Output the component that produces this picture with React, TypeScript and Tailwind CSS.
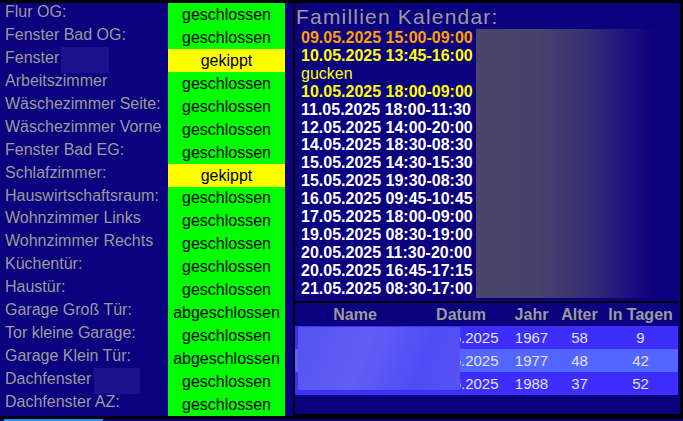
import React from "react";

const rows: { label: string; status: string; blur?: { left: number; width: number } }[] = [
  { label: "Flur OG:", status: "geschlossen" },
  { label: "Fenster Bad OG:", status: "geschlossen" },
  { label: "Fenster", status: "gekippt", blur: { left: 61, width: 48 } },
  { label: "Arbeitszimmer", status: "geschlossen" },
  { label: "Wäschezimmer Seite:", status: "geschlossen" },
  { label: "Wäschezimmer Vorne", status: "geschlossen" },
  { label: "Fenster Bad EG:", status: "geschlossen" },
  { label: "Schlafzimmer:", status: "gekippt" },
  { label: "Hauswirtschaftsraum:", status: "geschlossen" },
  { label: "Wohnzimmer Links", status: "geschlossen" },
  { label: "Wohnzimmer Rechts", status: "geschlossen" },
  { label: "Küchentür:", status: "geschlossen" },
  { label: "Haustür:", status: "geschlossen" },
  { label: "Garage Groß Tür:", status: "abgeschlossen" },
  { label: "Tor kleine Garage:", status: "geschlossen" },
  { label: "Garage Klein Tür:", status: "abgeschlossen" },
  { label: "Dachfenster", status: "geschlossen", blur: { left: 94, width: 46 } },
  { label: "Dachfenster AZ:", status: "geschlossen" },
];

const events: { text: string; color: string; bold: boolean }[] = [
  { text: "09.05.2025 15:00-09:00", color: "text-[#ffa200]", bold: true },
  { text: "10.05.2025 13:45-16:00", color: "text-[#ffff00]", bold: true },
  { text: "gucken", color: "text-[#ffff00]", bold: false },
  { text: "10.05.2025 18:00-09:00", color: "text-[#ffff00]", bold: true },
  { text: "11.05.2025 18:00-11:30", color: "text-white", bold: true },
  { text: "12.05.2025 14:00-20:00", color: "text-white", bold: true },
  { text: "14.05.2025 18:30-08:30", color: "text-white", bold: true },
  { text: "15.05.2025 14:30-15:30", color: "text-white", bold: true },
  { text: "15.05.2025 19:30-08:30", color: "text-white", bold: true },
  { text: "16.05.2025 09:45-10:45", color: "text-white", bold: true },
  { text: "17.05.2025 18:00-09:00", color: "text-white", bold: true },
  { text: "19.05.2025 08:30-19:00", color: "text-white", bold: true },
  { text: "20.05.2025 11:30-20:00", color: "text-white", bold: true },
  { text: "20.05.2025 16:45-17:15", color: "text-white", bold: true },
  { text: "21.05.2025 08:30-17:00", color: "text-white", bold: true },
];

const birthdays = [
  { name: "Person A", datum: "18.05.2025", jahr: "1967", alter: "58", tage: "9", bg: "bg-[#3d2efc]" },
  { name: "Person B", datum: "20.06.2025", jahr: "1977", alter: "48", tage: "42", bg: "bg-[#5366ff]" },
  { name: "Person C", datum: "30.06.2025", jahr: "1988", alter: "37", tage: "52", bg: "bg-[#3d2efc]" },
];

const cols = "grid grid-cols-[120px_92px_49px_47px_75px]";

export default function App() {
  return (
    <div className="w-[683px] h-[421px] bg-black overflow-hidden font-['Liberation_Sans',Arial,sans-serif]">
      <div className="h-[3px]" />
      <div className="flex h-[413px] bg-[#0b007d]">
        {/* left: sensors */}
        <div className="w-[293px] flex flex-col">
          {rows.map((r, i) => (
            <div key={i} className="relative flex h-[22.94px]">
              <div className="w-[168px] pl-[5px] text-[16px] leading-[18px] text-[#9b9b9b] whitespace-nowrap">
                {r.label}
              </div>
              {r.blur && (
                <div
                  className="absolute top-[-2px] h-[26px] bg-[#1a1290]"
                  style={{ left: r.blur.left, width: r.blur.width }}
                />
              )}
              <div
                className={`w-[117px] flex items-center justify-center text-[16px] leading-[23px] text-black whitespace-nowrap ${
                  r.status === "gekippt" ? "bg-[#ffff00]" : "bg-[#00ff00]"
                }`}
              >
                {r.status}
              </div>
            </div>
          ))}
        </div>

        {/* right panel */}
        <div className="w-[390px] flex flex-col border-l-2 border-r-[3px] border-b-2 border-black">
          <div className="h-[298px] flex flex-col">
            <div className="pl-[1px] pt-[2px] text-[21px] leading-[24px] tracking-[1.2px] text-[#9b9b9b] whitespace-nowrap">
              Famillien Kalendar:
            </div>
            <div className="flex">
              <div className="w-[181px] pl-[6px]">
                {events.map((e, i) => (
                  <div
                    key={i}
                    className={`text-[16px] leading-[17.9px] whitespace-nowrap ${e.color} ${e.bold ? "font-bold" : "font-normal"}`}
                  >
                    {e.text}
                  </div>
                ))}
              </div>
              <div className="w-[177px] h-[269px] bg-[linear-gradient(to_right,#4a4468_0%,#47416b_35%,#3a3173_60%,#1f1380_85%,#0e027d_100%)]" />
            </div>
          </div>

          <div className="flex-1 border-t-2 border-black mr-[2px] relative">
            <div className={`${cols} h-[23px] text-[16px] leading-[23px] font-bold text-[#9b9b9b] text-center`}>
              <div>Name</div>
              <div>Datum</div>
              <div>Jahr</div>
              <div>Alter</div>
              <div>In Tagen</div>
            </div>
            {birthdays.map((b, i) => (
              <div key={i} className={`${cols} h-[23px] text-[15px] leading-[23px] text-[#e2e2f2] text-center ${b.bg}`}>
                <div>{b.name}</div>
                <div>{b.datum}</div>
                <div>{b.jahr}</div>
                <div>{b.alter}</div>
                <div>{b.tage}</div>
              </div>
            ))}
            <div className="absolute left-[3px] top-[24px] w-[162px] h-[63px] bg-[linear-gradient(110deg,#5553f0_0%,#625ff6_40%,#4f4cf5_75%,#5653f2_100%)]" />
          </div>
        </div>
      </div>
      <div className="h-[3px]" />
      <div className="h-[2px] bg-[#0b007d]">
        <div className="ml-[4px] w-[99px] h-full bg-[#1e90ff]" />
      </div>
    </div>
  );
}
